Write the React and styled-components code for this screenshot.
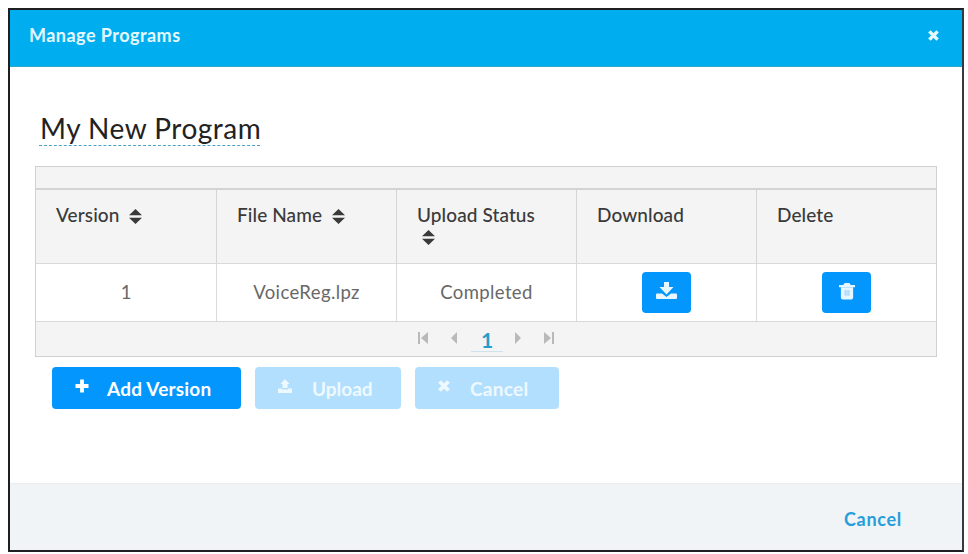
import React from "react"
import styled, { createGlobalStyle } from "styled-components"

const GlobalStyle = createGlobalStyle`
  * {
    box-sizing: border-box;
  }

  body {
    margin: 0;
    background: #fff;
    font-family: Lato, "Liberation Sans", sans-serif;
  }

  button {
    font-family: inherit;
    border: 0;
    padding: 0;
  }
`

const Page = styled.div`
  height: 554px;
  padding: 8px 4px 2px 8px;
`

const Dialog = styled.section`
  display: flex;
  flex-direction: column;
  height: 544px;
  border: 2px solid #1d1f20;
  border-right-color: #343a40;
`

const DialogHeader = styled.header`
  display: flex;
  justify-content: space-between;
  height: 57px;
  padding: 14px 23px 0 19px;
  background: #00aeef;
  border-bottom: 1px solid #2fa6cb;
  color: #e4f8ff;
`

const DialogTitle = styled.h1`
  margin: 0;
  font-size: 18px;
  line-height: 22px;
  font-weight: 700;
  letter-spacing: 0.47px;
`

const CloseButton = styled.button`
  display: flex;
  align-items: center;
  height: 22px;
  background: none;
  color: inherit;
`

const DialogBody = styled.div`
  flex: 1;
  padding: 45px 25px 0;
`

const ProgramName = styled.h2`
  width: 221px;
  height: 34px;
  margin: 0 0 20px 4px;
  padding-left: 1px;
  border-bottom: 1px dashed #4a9fc4;
  font-size: 28px;
  line-height: 32px;
  font-weight: 400;
  letter-spacing: 0.5px;
  white-space: nowrap;
  color: #222;
`

const Table = styled.div`
  width: 902px;
  border: 1px solid #d0d0d0;
  background: #f4f4f4;
`

const Caption = styled.div`
  height: 23px;
  border-bottom: 2px solid #d3d3d3;
`

const Row = styled.div`
  display: grid;
  grid-template-columns: 181px 180px 180px 180px 1fr;
  height: ${props => props.$height}px;
  border-bottom: 1px solid #d9d9d9;
  background: ${props => props.$background || "none"};
`

const HeadCell = styled.div`
  padding: 14px 30px 0 20px;
  border-right: 1px solid #d5d5d5;
  font-size: 19px;
  line-height: 21px;
  font-weight: 500;
  letter-spacing: 0.1px;
  color: #3a3a3a;

  &:last-child {
    border-right: 0;
  }

  svg {
    margin-left: 5px;
    vertical-align: -2px;
  }
`

const Cell = styled.div`
  display: flex;
  align-items: center;
  justify-content: center;
  padding-bottom: 1px;
  border-right: 1px solid #d9d9d9;
  font-size: 18.5px;
  letter-spacing: ${props => props.$spacing || "0"};
  color: #686868;

  &:last-child {
    border-right: 0;
  }
`

const IconButton = styled.button`
  display: flex;
  align-items: center;
  justify-content: center;
  width: 49px;
  height: 41px;
  padding-bottom: 3px;
  border-radius: 4px;
  background: #0397fd;
  color: #e8f7ff;
`

const Pager = styled.nav`
  display: flex;
  align-items: flex-start;
  height: 34px;
  padding: 10px 0 0 382px;
  color: #b9b9b9;
`

const PageArrow = styled.span`
  display: flex;
  width: 31px;
`

const PageNumber = styled.span`
  width: 32px;
  height: 24px;
  margin: -4px 9px 0 -9px;
  border-bottom: 1px solid #cfe3ec;
  text-align: center;
  font-size: 21px;
  line-height: 23px;
  font-weight: 700;
  color: #259fc9;
`

const Actions = styled.div`
  display: flex;
  gap: 14px;
  padding: 10px 0 0 17px;
`

const ActionButton = styled.button`
  display: flex;
  align-items: center;
  width: ${props => props.$width}px;
  height: 42px;
  padding-left: 23px;
  border-radius: 4px;
  background: #0397fd;
  color: #fff;
  font-size: 19px;
  font-weight: 700;
  letter-spacing: ${props => props.$spacing || "0"};

  svg {
    flex: none;
    margin: 0 ${props => props.$gap || 18}px 4px 0;
  }

  &:disabled {
    background: #b2dffd;
    color: #eef9ff;
  }
`

const DialogFooter = styled.footer`
  display: flex;
  justify-content: flex-end;
  height: 67px;
  padding: 23px 60px 0 0;
  border-top: 1px solid #ededed;
  background: #f0f4f7;
`

const FooterLink = styled.button`
  height: 24px;
  background: none;
  color: #279ed9;
  font-size: 18px;
  line-height: 24px;
  font-weight: 700;
  letter-spacing: 0.7px;
`

const TimesIcon = ({ size = 12 }) => (
  <svg width={size} height={size} viewBox="0 0 12 12" fill="none" stroke="currentColor" strokeWidth="3.8">
    <path d="M1.5 1.5l9 9M10.5 1.5l-9 9" />
  </svg>
)

const PlusIcon = () => (
  <svg width="14" height="14" viewBox="0 0 14 14" fill="none" stroke="currentColor" strokeWidth="3.8">
    <path d="M7 .5v13M.5 7h13" />
  </svg>
)

const SortIcon = () => (
  <svg width="13" height="15" viewBox="0 0 13 15" fill="currentColor">
    <path d="M6.5 0L13 6.3H0zM0 8.7h13L6.5 15z" />
  </svg>
)

const DownloadIcon = () => (
  <svg width="21" height="18" viewBox="0 0 21 18" fill="currentColor">
    <path d="M8 0h5v5h4.5l-7 7.5L3.5 5H8z" />
    <path d="M1 11.5h5l4.5 3.5 4.5-3.5h5q1 0 1 1V16q0 1-1 1H1q-1 0-1-1v-3.500q0-1 1-1z" />
  </svg>
)

const UploadIcon = () => (
  <svg width="14" height="14" viewBox="0 0 14 14" fill="currentColor">
    <path d="M7 0l4.500 5H9.500V9h-5V5h-2z" />
    <path d="M0 9.500h4V10.500h6V9.500h4V14H0z" />
  </svg>
)

const TrashIcon = () => (
  <svg width="16" height="18" viewBox="0 0 17 18" fill="currentColor">
    <path d="M4.500 2.500L6 .5h5l1.500 2H17v2.500H0V2.500z" />
    <path d="M2 5h13v11q0 2-2 2H4q-2 0-2-2z" />
    <path d="M6.500 8v6M8.500 8v6M10.500 8v6" stroke="#8ccaf0" />
  </svg>
)

const ArrowIcon = ({ bar, flip }) => (
  <svg width="11" height="12" viewBox="0 0 11 12" fill="currentColor">
    <g transform={flip ? "translate(11 0) scale(-1 1)" : undefined}>
      {bar && <path d="M0 0h2v12H0z" />}
      <path d={bar ? "M10 0v12L3 6z" : "M8 0v12L2 6z"} />
    </g>
  </svg>
)

const columns = [
  { label: "Version", sortable: true },
  { label: "File Name", sortable: true },
  { label: "Upload Status", sortable: true },
  { label: "Download" },
  { label: "Delete" },
]

const versions = [{ version: "1", file: "VoiceReg.lpz", status: "Completed" }]

const ProgramTable = () => (
  <Table>
    <Caption />
    <Row $height={74}>
      {columns.map(column => (
        <HeadCell key={column.label}>
          {column.label} {column.sortable && <SortIcon />}
        </HeadCell>
      ))}
    </Row>
    {versions.map(item => (
      <Row key={item.version} $height={58} $background="#fff">
        <Cell>{item.version}</Cell>
        <Cell $spacing="0.4px">{item.file}</Cell>
        <Cell $spacing="0.4px">{item.status}</Cell>
        <Cell><IconButton aria-label="Download"><DownloadIcon /></IconButton></Cell>
        <Cell><IconButton aria-label="Delete"><TrashIcon /></IconButton></Cell>
      </Row>
    ))}
    <Pager>
      <PageArrow><ArrowIcon bar /></PageArrow>
      <PageArrow><ArrowIcon /></PageArrow>
      <PageNumber>1</PageNumber>
      <PageArrow><ArrowIcon flip /></PageArrow>
      <PageArrow><ArrowIcon bar flip /></PageArrow>
    </Pager>
  </Table>
)

export default function App() {
  return (
    <Page>
      <GlobalStyle />
      <Dialog>
        <DialogHeader>
          <DialogTitle>Manage Programs</DialogTitle>
          <CloseButton aria-label="Close"><TimesIcon size={11} /></CloseButton>
        </DialogHeader>
        <DialogBody>
          <ProgramName>My New Program</ProgramName>
          <ProgramTable />
          <Actions>
            <ActionButton $width={189} $spacing="0.2px"><PlusIcon />Add Version</ActionButton>
            <ActionButton $width={146} $gap={20} disabled><UploadIcon />Upload</ActionButton>
            <ActionButton $width={144} $gap={20} $spacing="0.3px" disabled><TimesIcon />Cancel</ActionButton>
          </Actions>
        </DialogBody>
        <DialogFooter>
          <FooterLink>Cancel</FooterLink>
        </DialogFooter>
      </Dialog>
    </Page>
  )
}
